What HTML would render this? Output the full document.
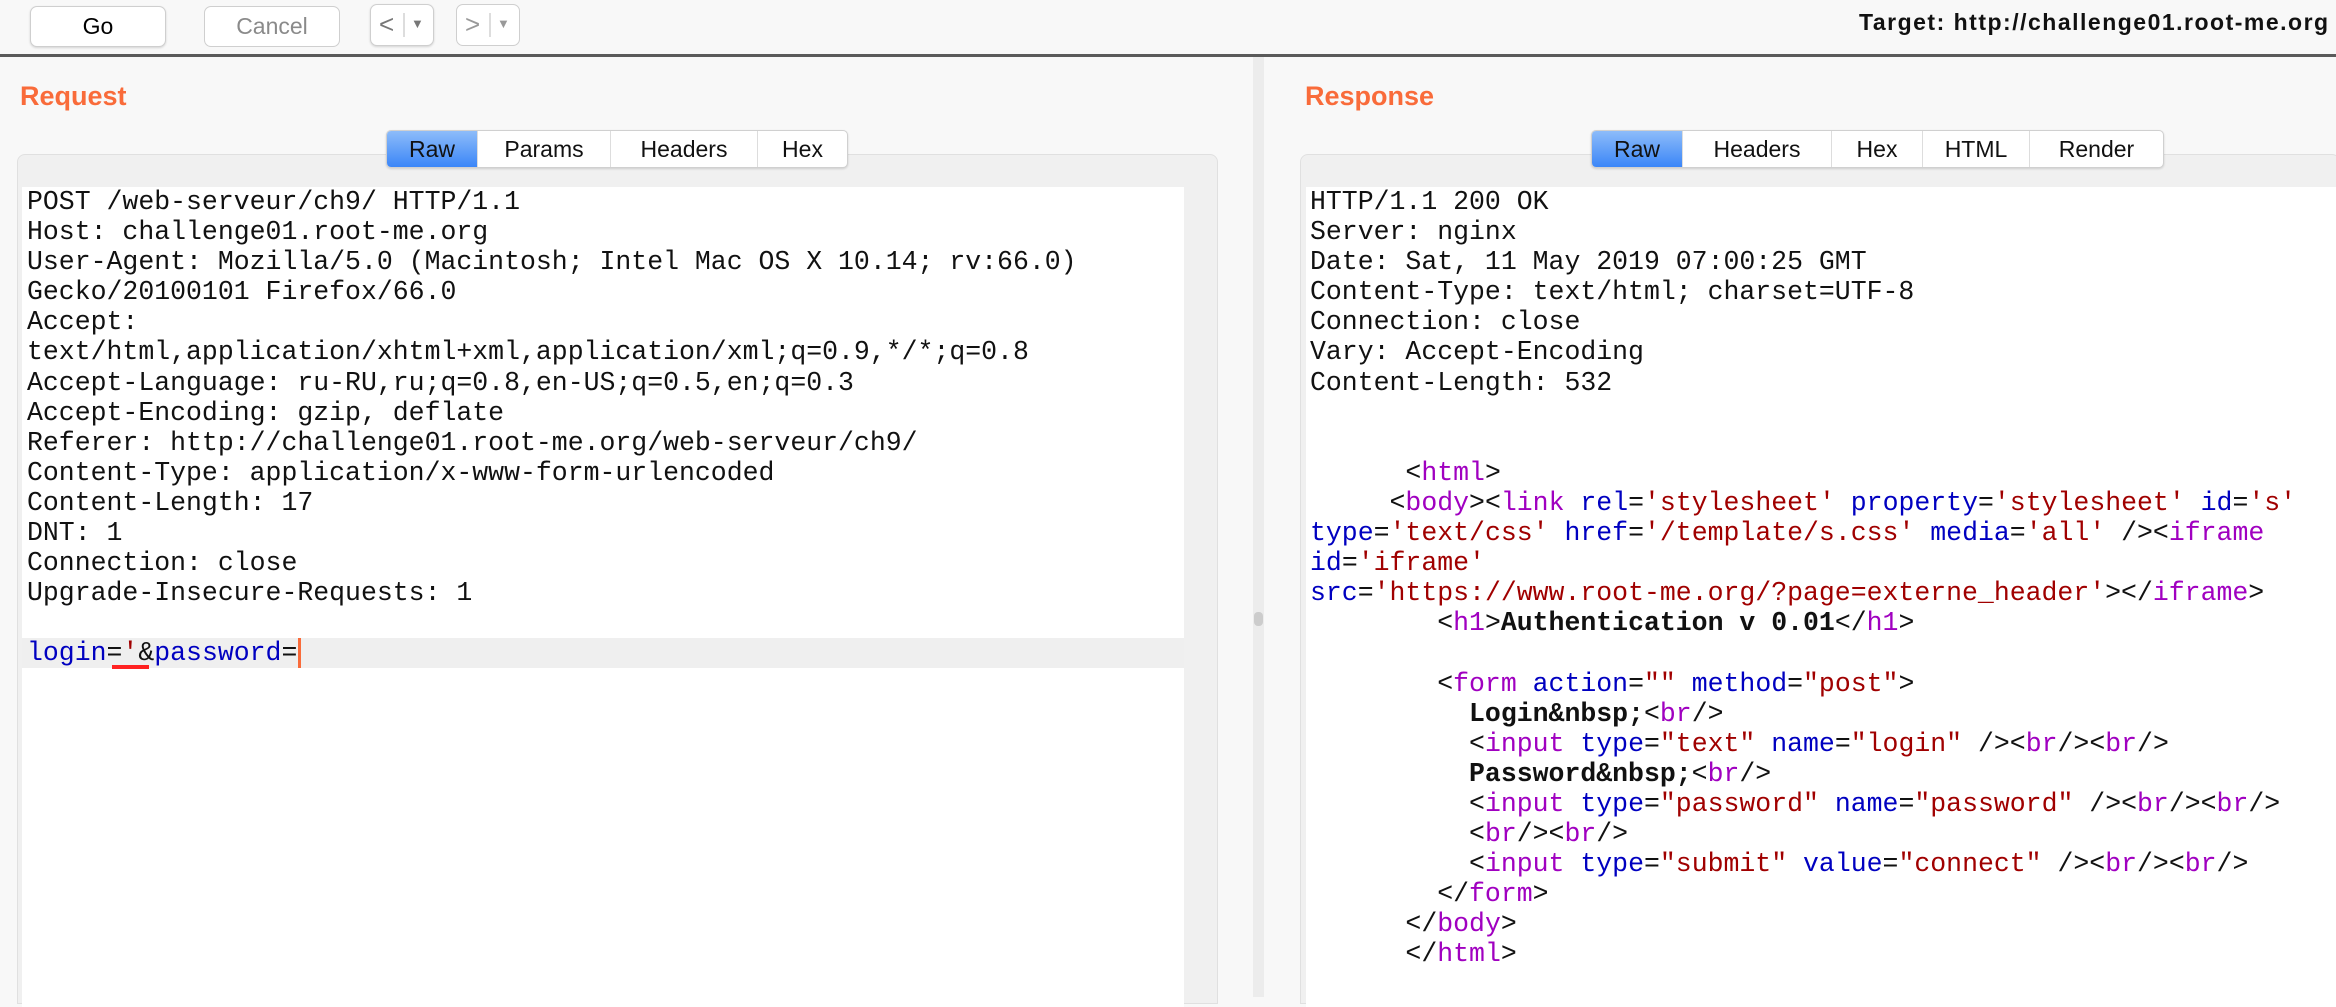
<!DOCTYPE html>
<html><head><meta charset="utf-8"><style>
*{margin:0;padding:0;box-sizing:border-box}
body{width:2336px;height:994px;background:#f8f8f8;position:relative;overflow:hidden;font-family:"Liberation Sans",sans-serif}
.abs{position:absolute}
.btn{position:absolute;background:#fff;border:1px solid #cfcfcf;border-radius:7px;box-shadow:0 1px 2px rgba(0,0,0,.15);font-size:23px;text-align:center;line-height:38px}
.tabs{position:absolute;top:130px;height:38px;display:flex;border:1px solid #d0d0d0;border-radius:5px;background:#fff;box-shadow:0 1px 2px rgba(0,0,0,.15);overflow:hidden;z-index:2}
.tabs div{font-size:23px;line-height:36px;text-align:center;border-right:1px solid #ddd;color:#111}
.tabs div:last-child{border-right:none}
.tabs .on{background:linear-gradient(#8dbcf9,#3b86f8);color:#111}
.panel{position:absolute;top:154px;background:#f0f0f0;border:1px solid #e0e0e0;border-radius:8px 8px 0 0;height:850px}
.code{position:absolute;top:187px;background:#fff;height:820px;font-family:"Liberation Mono",monospace;font-size:26.5px;line-height:30.1px;white-space:pre;color:#111}
.t{color:#a000c0}.a{color:#0000c0}.v{color:#a00000}.b{font-weight:bold}
h2{position:absolute;top:81px;font-size:27px;color:#f96b3a;font-weight:bold}
</style></head><body>
<div class="abs" style="left:0;top:0;width:2336px;height:54px;background:#f8f8f8"></div>
<div class="abs" style="left:0;top:54px;width:2336px;height:3px;background:#5a5a5a"></div>
<div class="btn" style="left:30px;top:6px;width:136px;height:41px">Go</div>
<div class="btn" style="left:204px;top:6px;width:136px;height:41px;color:#8a8a8a;box-shadow:none">Cancel</div>
<div class="btn" style="left:370px;top:4px;width:64px;height:42px;color:#777;font-size:26px;text-align:left;padding-left:8px">&lt;<span style="position:absolute;left:32px;top:8px;width:2px;height:24px;background:#ddd"></span><span style="position:absolute;left:40px;top:0;font-size:13px">▼</span></div>
<div class="btn" style="left:456px;top:4px;width:64px;height:42px;color:#999;font-size:26px;text-align:left;padding-left:8px;box-shadow:none">&gt;<span style="position:absolute;left:32px;top:8px;width:2px;height:24px;background:#ddd"></span><span style="position:absolute;left:40px;top:0;font-size:13px">▼</span></div>
<div class="abs" style="left:1859px;top:9px;font-size:23px;letter-spacing:1.5px;font-weight:bold;white-space:nowrap;color:#111">Target: http://challenge01.root-me.org</div>

<h2 style="left:20px">Request</h2>
<h2 style="left:1305px">Response</h2>

<div class="abs" style="left:1253px;top:57px;width:11px;height:940px;background:#ececec"></div>
<div class="abs" style="left:1254px;top:612px;width:9px;height:14px;background:#ccc;border-radius:4px"></div>

<div class="panel" style="left:17px;width:1201px"></div>
<div class="tabs" style="left:386px"><div class="on" style="width:91px">Raw</div><div style="width:133px">Params</div><div style="width:147px">Headers</div><div style="width:89px">Hex</div></div>
<div class="code" style="left:22px;width:1162px;padding-left:5px">POST /web-serveur/ch9/ HTTP/1.1
Host: challenge01.root-me.org
User-Agent: Mozilla/5.0 (Macintosh; Intel Mac OS X 10.14; rv:66.0)
Gecko/20100101 Firefox/66.0
Accept:
text/html,application/xhtml+xml,application/xml;q=0.9,*/*;q=0.8
Accept-Language: ru-RU,ru;q=0.8,en-US;q=0.5,en;q=0.3
Accept-Encoding: gzip, deflate
Referer: http://challenge01.root-me.org/web-serveur/ch9/
Content-Type: application/x-www-form-urlencoded
Content-Length: 17
DNT: 1
Connection: close
Upgrade-Insecure-Requests: 1
</div>
<div class="abs" style="left:22px;top:638px;width:1162px;height:30px;background:#efefef"></div>
<div class="code" style="left:22px;top:638px;height:30px;background:transparent;padding-left:5px"><span class="a">login</span>=<span class="v">'</span>&amp;<span class="a">password</span>=</div>
<div class="abs" style="left:112px;top:665px;width:37px;height:4px;background:#f22"></div>
<div class="abs" style="left:298px;top:638px;width:3px;height:30px;background:#f96b3a"></div>

<div class="panel" style="left:1300px;width:1040px"></div>
<div class="tabs" style="left:1591px"><div class="on" style="width:91px">Raw</div><div style="width:149px">Headers</div><div style="width:91px">Hex</div><div style="width:107px">HTML</div><div style="width:133px">Render</div></div>
<div class="code" style="left:1306px;width:1040px;padding-left:4px">HTTP/1.1 200 OK
Server: nginx
Date: Sat, 11 May 2019 07:00:25 GMT
Content-Type: text/html; charset=UTF-8
Connection: close
Vary: Accept-Encoding
Content-Length: 532


      &lt;<span class="t">html</span>&gt;
     &lt;<span class="t">body</span>&gt;&lt;<span class="t">link</span> <span class="a">rel</span>=<span class="v">'stylesheet'</span> <span class="a">property</span>=<span class="v">'stylesheet'</span> <span class="a">id</span>=<span class="v">'s'</span>
<span class="a">type</span>=<span class="v">'text/css'</span> <span class="a">href</span>=<span class="v">'/template/s.css'</span> <span class="a">media</span>=<span class="v">'all'</span> /&gt;&lt;<span class="t">iframe</span>
<span class="a">id</span>=<span class="v">'iframe'</span>
<span class="a">src</span>=<span class="v">'https://www.root-me.org/?page=externe_header'</span>&gt;&lt;/<span class="t">iframe</span>&gt;
        &lt;<span class="t">h1</span>&gt;<span class="b">Authentication v 0.01</span>&lt;/<span class="t">h1</span>&gt;

        &lt;<span class="t">form</span> <span class="a">action</span>=<span class="v">""</span> <span class="a">method</span>=<span class="v">"post"</span>&gt;
          <span class="b">Login&amp;nbsp;</span>&lt;<span class="t">br</span>/&gt;
          &lt;<span class="t">input</span> <span class="a">type</span>=<span class="v">"text"</span> <span class="a">name</span>=<span class="v">"login"</span> /&gt;&lt;<span class="t">br</span>/&gt;&lt;<span class="t">br</span>/&gt;
          <span class="b">Password&amp;nbsp;</span>&lt;<span class="t">br</span>/&gt;
          &lt;<span class="t">input</span> <span class="a">type</span>=<span class="v">"password"</span> <span class="a">name</span>=<span class="v">"password"</span> /&gt;&lt;<span class="t">br</span>/&gt;&lt;<span class="t">br</span>/&gt;
          &lt;<span class="t">br</span>/&gt;&lt;<span class="t">br</span>/&gt;
          &lt;<span class="t">input</span> <span class="a">type</span>=<span class="v">"submit"</span> <span class="a">value</span>=<span class="v">"connect"</span> /&gt;&lt;<span class="t">br</span>/&gt;&lt;<span class="t">br</span>/&gt;
        &lt;/<span class="t">form</span>&gt;
      &lt;/<span class="t">body</span>&gt;
      &lt;/<span class="t">html</span>&gt;</div>
</body></html>
